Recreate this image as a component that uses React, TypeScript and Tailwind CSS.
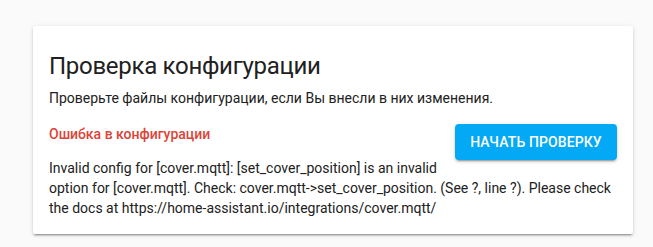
export default function App() {
	return (
		<div className="h-[247px] w-full overflow-hidden bg-[#fafafa] pt-[26px] pl-[33px] font-['Roboto',sans-serif] text-[#212121]">
			<div className="w-[600px] rounded-[2px] bg-white shadow-[0_2px_2px_0_rgba(0,0,0,0.14),0_1px_5px_0_rgba(0,0,0,0.12),0_3px_1px_-2px_rgba(0,0,0,0.2)]">
				<div className="px-4 pt-6 pb-[6px] text-[24px] leading-[32px] tracking-[-0.012em]">
					Проверка конфигурации
				</div>
				<div className="px-4 pb-4 text-[14px] leading-5">
					<div>Проверьте файлы конфигурации, если Вы внесли в них изменения.</div>
					<div className="mt-[16px] mb-[14px]">
						<button
							type="button"
							className="float-right ml-2 h-9 w-[162px] rounded-[4px] bg-[#03a9f4] text-center font-medium text-[14px] text-white uppercase tracking-[0.1px] shadow-[0_3px_1px_-2px_rgba(0,0,0,0.2),0_2px_2px_0_rgba(0,0,0,0.14),0_1px_5px_0_rgba(0,0,0,0.12)]"
						>
							Начать проверку
						</button>
						<span className="font-medium text-[#db4437]">Ошибка в конфигурации</span>
					</div>
					<div>
						Invalid config for [cover.mqtt]: [set_cover_position] is an invalid option for
						[cover.mqtt]. Check: cover.mqtt-&gt;set_cover_position. (See ?, line ?). Please
						check the docs at https://home-assistant.io/integrations/cover.mqtt/
					</div>
				</div>
			</div>
		</div>
	);
}
